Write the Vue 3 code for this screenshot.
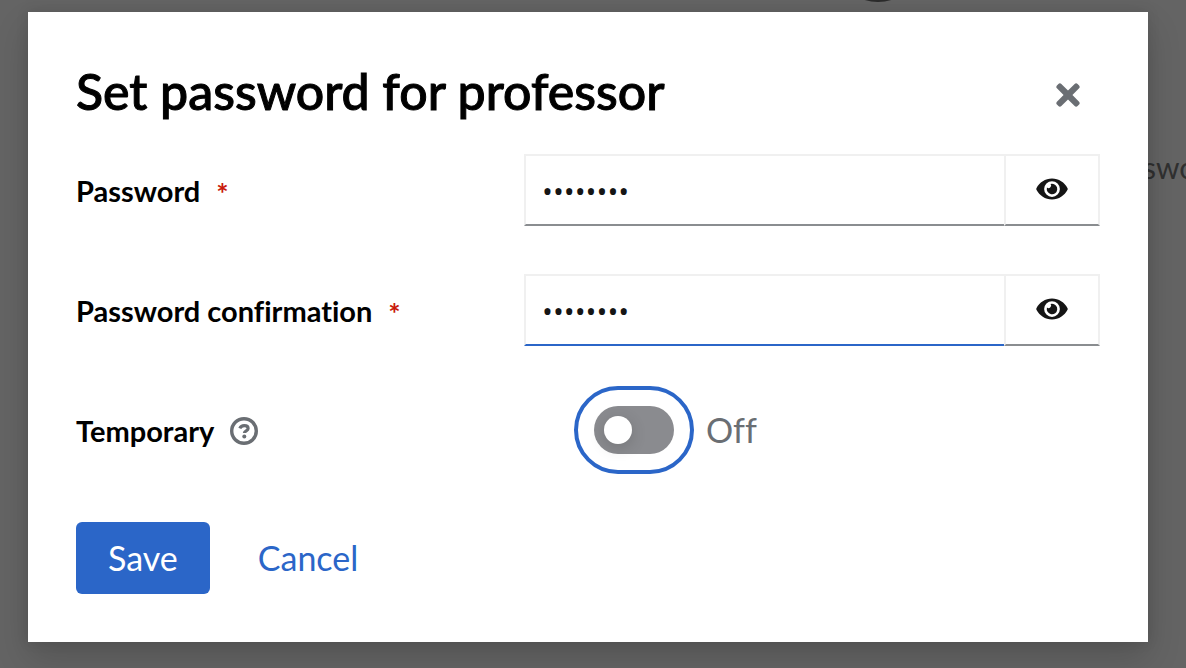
<script setup>
import { ref, reactive } from 'vue'

const fields = reactive([
  { id: 'password', label: 'Password', value: 'password', shown: false, active: false },
  { id: 'confirmation', label: 'Password confirmation', value: 'password', shown: false, active: true },
])
const temporary = ref(false)
</script>

<template>
  <div class="page">
    <div class="behind" aria-hidden="true">
      <span class="dot"></span>
      <span class="hint">swo</span>
    </div>
    <section class="modal" role="dialog" aria-modal="true" aria-labelledby="title">
      <header class="head">
        <h1 id="title">Set password for professor</h1>
        <button class="close" type="button" aria-label="Close">
          <svg width="24" height="34" viewBox="0 0 352 512" fill="currentColor">
            <path d="M242.72 256l100.07-100.07c12.28-12.28 12.28-32.19 0-44.48l-22.24-22.24c-12.28-12.28-32.19-12.28-44.48 0L176 189.28 75.93 89.21c-12.28-12.28-32.19-12.28-44.48 0L9.21 111.45c-12.28 12.28-12.28 32.19 0 44.48L109.28 256 9.21 356.07c-12.28 12.28-12.28 32.19 0 44.48l22.24 22.24c12.28 12.28 32.2 12.28 44.48 0L176 322.72l100.07 100.07c12.28 12.28 32.2 12.28 44.48 0l22.24-22.24c12.28-12.28 12.28-32.19 0-44.48L242.72 256z" />
          </svg>
        </button>
      </header>

      <form @submit.prevent>
        <div v-for="f in fields" :key="f.id" class="row">
          <div class="name">
            <label :for="f.id">{{ f.label }}</label>
            <span class="required" aria-hidden="true">*</span>
          </div>
          <div class="group">
            <input :id="f.id" v-model="f.value" :class="['text', { active: f.active }]" :type="f.shown ? 'text' : 'password'" required />
            <button class="reveal" type="button" aria-label="Show password" @click="f.shown = !f.shown">
              <svg width="32" height="28" viewBox="0 0 576 512" fill="currentColor">
                <path d="M572.52 241.4C518.29 135.59 410.93 64 288 64S57.68 135.64 3.48 241.41a32.35 32.35 0 0 0 0 29.19C57.71 376.41 165.07 448 288 448s230.32-71.64 284.52-177.41a32.35 32.35 0 0 0 0-29.19zM288 400a144 144 0 1 1 144-144 143.93 143.93 0 0 1-144 144zm0-240a95.31 95.31 0 0 0-25.31 3.79 47.85 47.85 0 0 1-66.9 66.9A95.78 95.78 0 1 0 288 160z" />
              </svg>
            </button>
          </div>
        </div>

        <div class="row">
          <div class="name">
            <label for="temporary">Temporary</label>
            <button class="help" type="button" aria-label="Help for Temporary">
              <svg width="28" height="28" viewBox="0 0 28 28" fill="none" stroke="currentColor">
                <circle cx="14" cy="14" r="12.3" stroke-width="3.4" />
                <path d="M9.8 11.4C10.7 9.5 12.2 8.7 14.2 8.7c2.3 0 3.9 1.1 3.9 2.8 0 2.4-3.7 2.3-3.7 4.6" stroke-width="3.2" />
                <circle cx="14.3" cy="19.4" r="2" fill="currentColor" stroke="none" />
              </svg>
            </button>
          </div>
          <div class="toggle">
            <input id="temporary" v-model="temporary" class="switch" type="checkbox" role="switch" />
            <label class="state" for="temporary">{{ temporary ? 'On' : 'Off' }}</label>
          </div>
        </div>

        <div class="actions">
          <button class="save" type="submit">Save</button>
          <button class="cancel" type="button">Cancel</button>
        </div>
      </form>
    </section>
  </div>
</template>

<style>
body {
  margin: 0;
  background: #646464;
}
</style>

<style scoped>
.page,
.page * {
  box-sizing: border-box;
}

.page {
  position: relative;
  min-height: 100vh;
  padding: 12px 38px 26px 28px;
  overflow: hidden;
  background: #646464;
  font-family: Lato, "Liberation Sans", sans-serif;
  font-size: 34px;
  line-height: 48px;
  font-variant-ligatures: none;
  color: #151515;
}

.behind {
  position: absolute;
  inset: 0;
  color: #303030;
}

.dot {
  position: absolute;
  left: 833px;
  top: -88px;
  width: 90px;
  height: 90px;
  border-radius: 50%;
  background: #2b2b2b;
}

.hint {
  position: absolute;
  left: 1143px;
  top: 143px;
  font-size: 30px;
}

.modal {
  position: relative;
  padding: 48px;
  background: #fff;
  box-shadow: 0 16px 32px rgba(3, 3, 3, 0.16), 0 0 12px rgba(3, 3, 3, 0.1);
}

.head {
  display: flex;
  align-items: center;
  justify-content: space-between;
  margin-bottom: 32px;
}

h1 {
  margin: 0;
  font-size: 50px;
  font-weight: 500;
  line-height: 62px;
  color: #000;
  -webkit-text-stroke: 1px #000;
}

button {
  padding: 0;
  border: 0;
  background: none;
  font: inherit;
  cursor: pointer;
}

svg {
  display: block;
}

.close {
  display: flex;
  align-items: center;
  justify-content: center;
  width: 64px;
  height: 48px;
  margin-top: 8px;
  color: #6a6e73;
}

form {
  display: flex;
  flex-direction: column;
  gap: 48px;
}

.row {
  display: grid;
  grid-template-columns: 7fr 9fr;
  align-items: center;
  min-height: 72px;
}

.name {
  display: flex;
  align-items: center;
  gap: 16px;
  padding-top: 2px;
  font-size: 29px;
  font-weight: 700;
  color: #000;
}

.required {
  padding-top: 4px;
  color: #c9190b;
}

.help {
  color: #6a6e73;
}

.group {
  display: flex;
  height: 72px;
}

.text,
.reveal {
  border: 2px solid #f0f0f0;
  border-bottom-color: #8a8d90;
  border-radius: 0;
  background: #fff;
}

.text {
  flex: 1;
  min-width: 0;
  padding: 0 16px;
  border-right: 0;
  font-family: "Open Sans", sans-serif;
  font-size: 29px;
  color: #151515;
  outline: none;
}

.text.active {
  border-bottom-color: #2b66c8;
}

.reveal {
  display: flex;
  align-items: center;
  justify-content: center;
  width: 96px;
  padding-bottom: 2px;
  color: #151515;
}

.toggle {
  display: flex;
  align-items: center;
  gap: 32px;
  padding-left: 70px;
}

.switch {
  appearance: none;
  display: flex;
  align-items: center;
  width: 80px;
  height: 48px;
  margin: 0;
  padding: 0 10px;
  border-radius: 24px;
  background: #8a8b8f;
  outline: 4px solid #2b66c8;
  outline-offset: 16px;
}

.switch::before {
  content: "";
  width: 28px;
  height: 28px;
  border-radius: 50%;
  background: #fff;
  box-shadow: 0 4px 16px rgba(3, 3, 3, 0.16);
}

.switch:checked {
  justify-content: flex-end;
  background: #2b66c8;
}

.state {
  color: #6a6e73;
}

.actions {
  display: flex;
  gap: 16px;
  margin-top: 8px;
}

.save,
.cancel {
  height: 72px;
  padding: 0 32px;
  border-radius: 6px;
  color: #2b66c8;
}

.save {
  background: #2b66c8;
  color: #fff;
}
</style>
